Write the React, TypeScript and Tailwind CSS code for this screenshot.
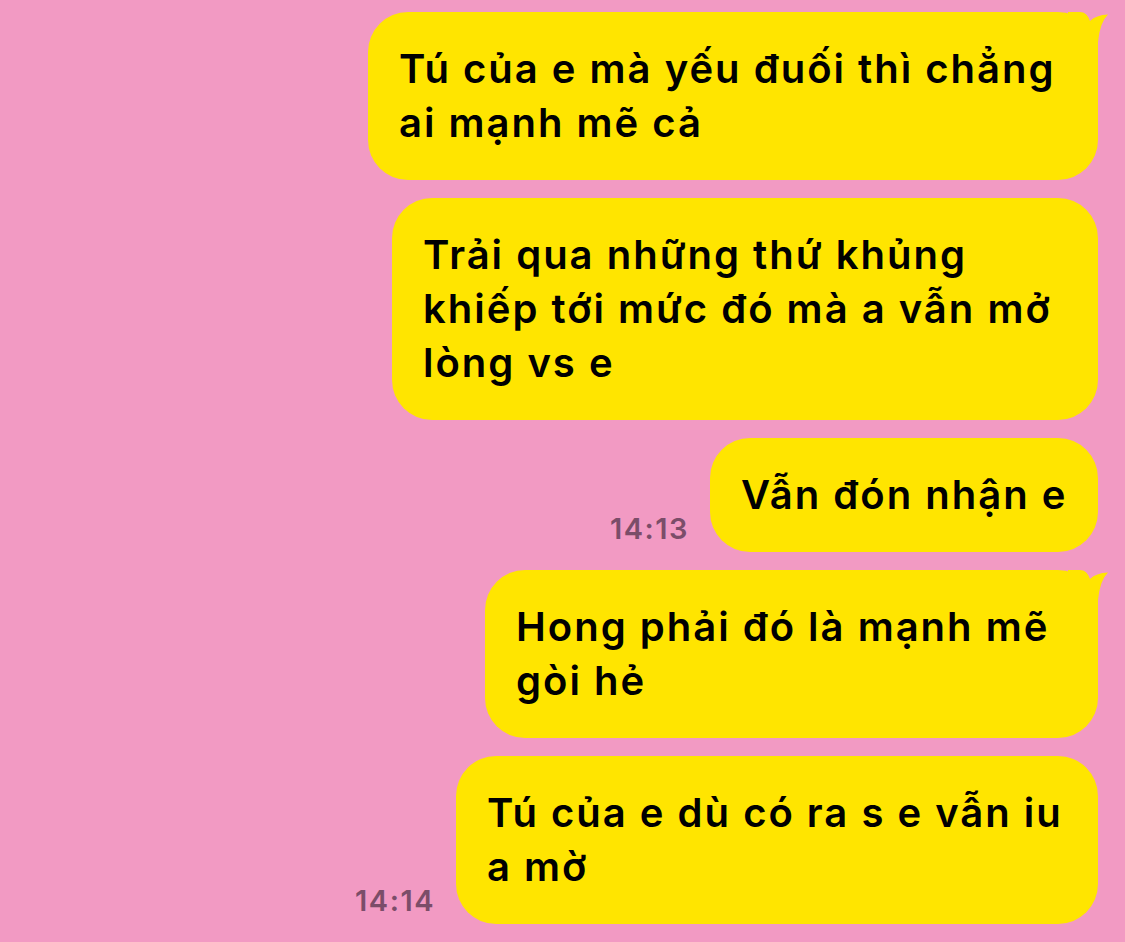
const messages = [
  { lines: ["Tú của e mà yếu đuối thì chẳng", "ai mạnh mẽ cả"], width: "w-[730px]", tail: true },
  { lines: ["Trải qua những thứ khủng", "khiếp tới mức đó mà a vẫn mở", "lòng vs e"], width: "w-[706px]" },
  { lines: ["Vẫn đón nhận e"], width: "w-[388px]", time: "14:13" },
  { lines: ["Hong phải đó là mạnh mẽ", "gòi hẻ"], width: "w-[613px]", tail: true },
  { lines: ["Tú của e dù có ra s e vẫn iu", "a mờ"], width: "w-[642px]", time: "14:14" },
];

function Tail() {
  return (
    <svg className="absolute right-[-10px] top-0" width="40" height="44" viewBox="0 0 40 44">
      <path d="M0 0 L12 0 Q19 0 22 9 Q28 3 40 2.5 Q32 10 30 30 L30 44 L0 44 Z" fill="#FFE500" />
    </svg>
  );
}

export default function App() {
  return (
    <div
      className="w-[1125px] h-[942px] overflow-hidden bg-[#F29AC3] flex flex-col items-end gap-[18px] pt-[12px] pr-[27px]"
      style={{ fontFamily: "Inter, 'Noto Sans', sans-serif" }}
    >
      {messages.map((m, i) => (
        <div key={i} className="flex items-end gap-[21px]">
          {m.time && (
            <span className="text-[29px] leading-none font-semibold text-[#7B4D69] tracking-[1.5px] mb-[9px]">{m.time}</span>
          )}
          <div
            className={`relative ${m.width} rounded-[40px] bg-[#FFE500] pl-[31px] pr-[20px] py-[30px] text-[40px] leading-[54px] font-semibold text-black tracking-[2px]`}
          >
            {m.tail && <Tail />}
            {m.lines.map((l, j) => (
              <div key={j} className="relative whitespace-nowrap">{l}</div>
            ))}
          </div>
        </div>
      ))}
    </div>
  );
}
